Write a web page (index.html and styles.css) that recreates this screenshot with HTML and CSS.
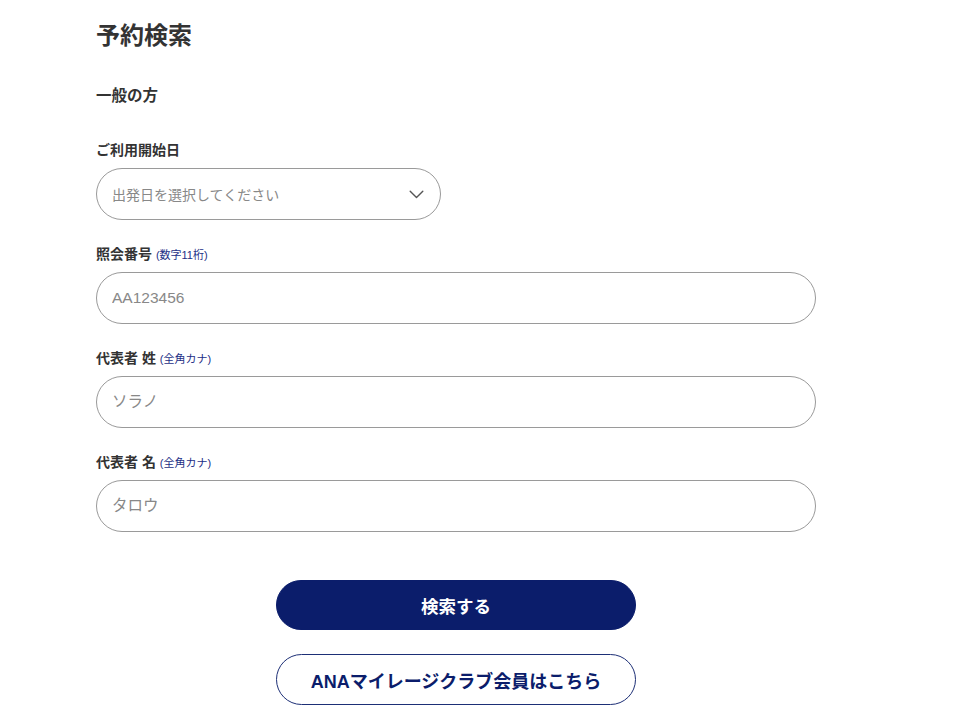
FILE: index.html
```html
<!DOCTYPE html>
<html lang="ja">
<head>
<meta charset="utf-8">
<title>予約検索</title>
<link rel="stylesheet" href="styles.css">
</head>
<body>
<main class="page">
  <h1 class="title">予約検索</h1>
  <h2 class="subtitle">一般の方</h2>

  <div class="field">
    <label class="label">ご利用開始日</label>
    <div class="select">
      <span class="placeholder">出発日を選択してください</span>
      <svg class="chevron" width="15" height="9" viewBox="0 0 15 9"><path d="M1.2 1.2 L7.5 7.5 L13.8 1.2" fill="none" stroke="#555" stroke-width="1.4" stroke-linecap="round" stroke-linejoin="round"/></svg>
    </div>
  </div>

  <div class="field">
    <label class="label">照会番号 <span class="note">(数字11桁)</span></label>
    <input class="input" type="text" placeholder="AA123456">
  </div>

  <div class="field">
    <label class="label">代表者 姓 <span class="note">(全角カナ)</span></label>
    <input class="input" type="text" placeholder="ソラノ">
  </div>

  <div class="field">
    <label class="label">代表者 名 <span class="note">(全角カナ)</span></label>
    <input class="input" type="text" placeholder="タロウ">
  </div>

  <div class="actions">
    <button class="btn btn-primary" type="button">検索する</button>
    <button class="btn btn-outline" type="button">ANAマイレージクラブ会員はこちら</button>
  </div>
</main>
</body>
</html>
```
FILE: styles.css
```css
* { box-sizing: border-box; }
html, body { margin: 0; padding: 0; background: #fff; }
body {
  font-family: "Liberation Sans", "Noto Sans CJK JP", sans-serif;
  color: #333;
}
.page {
  width: 720px;
  margin-left: 96px;
  padding-top: 19px;
}
.title {
  margin: 0;
  height: 34px;
  font-size: 24px;
  line-height: 34px;
  font-weight: 700;
  color: #333;
}
.subtitle {
  margin: 32px 0 0;
  height: 22px;
  font-size: 15.5px;
  line-height: 22px;
  font-weight: 700;
  color: #333;
}
.field {
  display: flex;
  flex-direction: column;
  gap: 8px;
  margin-top: 24px;
}
.subtitle + .field { margin-top: 33px; }
.label {
  display: block;
  height: 20px;
  font-size: 14px;
  line-height: 20px;
  font-weight: 700;
  color: #333;
}
.note {
  font-size: 11px;
  line-height: 1;
  font-weight: 400;
  color: #1d2f86;
}
.select {
  width: 345px;
  height: 52px;
  border: 1px solid #9a9a9a;
  border-radius: 26px;
  display: flex;
  align-items: center;
  justify-content: space-between;
  padding: 0 16px 0 15px;
}
.placeholder {
  font-size: 14px;
  color: #888;
}
.chevron { display: block; }
.input {
  width: 720px;
  height: 52px;
  border: 1px solid #9a9a9a;
  border-radius: 26px;
  padding: 0 15px;
  font-family: inherit;
  font-size: 15.5px;
  color: #333;
  background: #fff;
  outline: none;
}
.input::placeholder { color: #888; }
.actions {
  display: flex;
  flex-direction: column;
  align-items: center;
  gap: 24px;
  margin-top: 48px;
}
.btn {
  width: 360px;
  height: 51px;
  border-radius: 26px;
  font-family: inherit;
  font-weight: 700;
  cursor: pointer;
}
.btn-primary {
  height: 50px;
  background: #0b1d6b;
  border: 1px solid #0b1d6b;
  color: #fff;
  font-size: 17.5px;
}
.btn-outline {
  background: #fff;
  border: 1px solid #1d2f76;
  color: #0b1d6b;
  font-size: 18px;
}
```
